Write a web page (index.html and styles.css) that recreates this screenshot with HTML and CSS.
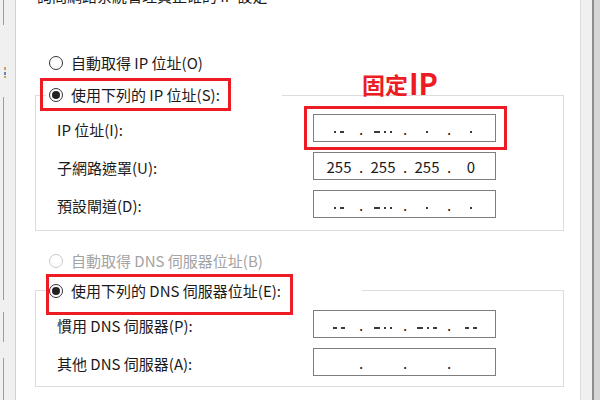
FILE: index.html
```html
<!DOCTYPE html>
<html lang="zh-Hant">
<head>
<meta charset="utf-8">
<title>IPv4 內容</title>
<link rel="stylesheet" href="styles.css">
</head>
<body>
<div class="window">
  <div class="side-left"></div>
  <main class="dialog">
    <p class="intro">詢問網路系統管理員正確的 IP 設定</p>
    <div class="opt standalone"><span class="radio"></span><span>自動取得 IP 位址(O)</span></div>
    <div class="annot-title"><span class="cjk">固定</span><span class="lat">IP</span></div>

    <section class="group g1">
      <div class="legend l1">
        <div class="opt"><span class="radio on"></span><span>使用下列的 IP 位址(S):</span></div>
        <span class="mark mk1"></span>
      </div>
      <div class="rows">
        <div class="row">
          <span class="label">IP 位址(I):</span>
          <div class="field">
            <div class="ip">
              <span class="seg blur"><b class="d"></b><b class="s"></b></span><span class="dot">.</span>
              <span class="seg blur"><b class="l"></b><b class="d"></b><b class="d"></b></span><span class="dot">.</span>
              <span class="seg blur"><b class="d"></b></span><span class="dot">.</span>
              <span class="seg blur"><b class="d"></b></span>
            </div>
            <span class="mark mk2"></span>
          </div>
        </div>
        <div class="row">
          <span class="label">子網路遮罩(U):</span>
          <div class="field">
            <div class="ip">
              <span class="seg">255</span><span class="dot">.</span>
              <span class="seg">255</span><span class="dot">.</span>
              <span class="seg">255</span><span class="dot">.</span>
              <span class="seg">0</span>
            </div>
          </div>
        </div>
        <div class="row">
          <span class="label">預設閘道(D):</span>
          <div class="field">
            <div class="ip">
              <span class="seg blur"><b class="d"></b><b class="s"></b></span><span class="dot">.</span>
              <span class="seg blur"><b class="l"></b><b class="d"></b><b class="d"></b></span><span class="dot">.</span>
              <span class="seg blur"><b class="d"></b></span><span class="dot">.</span>
              <span class="seg blur"><b class="d"></b></span>
            </div>
          </div>
        </div>
      </div>
    </section>

    <div class="opt standalone disabled"><span class="radio off"></span><span>自動取得 DNS 伺服器位址(B)</span></div>

    <section class="group g2">
      <div class="legend l2">
        <div class="opt"><span class="radio on"></span><span>使用下列的 DNS 伺服器位址(E):</span></div>
        <span class="mark mk3"></span>
      </div>
      <div class="rows">
        <div class="row">
          <span class="label">慣用 DNS 伺服器(P):</span>
          <div class="field">
            <div class="ip">
              <span class="seg blur"><b class="s"></b><b class="s"></b></span><span class="dot">.</span>
              <span class="seg blur"><b class="l"></b><b class="d"></b><b class="d"></b></span><span class="dot">.</span>
              <span class="seg blur"><b class="l"></b><b class="d"></b><b class="s"></b></span><span class="dot">.</span>
              <span class="seg blur"><b class="s"></b><b class="s"></b></span>
            </div>
          </div>
        </div>
        <div class="row">
          <span class="label">其他 DNS 伺服器(A):</span>
          <div class="field">
            <div class="ip">
              <span class="seg"></span><span class="dot">.</span>
              <span class="seg"></span><span class="dot">.</span>
              <span class="seg"></span><span class="dot">.</span>
              <span class="seg"></span>
            </div>
          </div>
        </div>
      </div>
    </section>
  </main>
  <div class="side-right"></div>
</div>
</body>
</html>
```

FILE: styles.css
```css
* { box-sizing: border-box; }

html, body {
  margin: 0;
  padding: 0;
}

body {
  width: 600px;
  height: 400px;
  overflow: hidden;
  background: #ffffff;
  font-family: "Noto Sans CJK TC", "Noto Sans", "Liberation Sans", sans-serif;
  font-size: 15px;
  color: #1a1a1a;
}

.window {
  display: flex;
  width: 600px;
  height: 400px;
}

.side-left {
  flex: none;
  width: 16px;
  height: 400px;
  border-right: 1px solid #d2d2d2;
  background:
    linear-gradient(#9c9c9c, #9c9c9c) 3px 0 / 1px 25px no-repeat,
    linear-gradient(#9c9c9c, #9c9c9c) 3px 97px / 1px 203px no-repeat,
    linear-gradient(#9c9c9c, #9c9c9c) 3px 312px / 1px 30px no-repeat,
    linear-gradient(#9c9c9c, #9c9c9c) 3px 358px / 1px 42px no-repeat,
    linear-gradient(#c8a060, #c8a060) 4px 67px / 2px 3px no-repeat,
    linear-gradient(#7080b0, #7080b0) 4px 72px / 2px 3px no-repeat,
    linear-gradient(#c8a060, #c8a060) 4px 76px / 2px 2px no-repeat,
    #f0f0f0;
}

.side-right {
  flex: none;
  width: 20px;
  height: 400px;
  border-left: 1px solid #dcdcdc;
  background: linear-gradient(to right, #f0f0f0 0 11px, #8e8e8e 11px 13px, #d6d6d6 13px);
}

.dialog {
  flex: 1;
  position: relative;
  padding-left: 19px;
  background: #ffffff;
}

.intro {
  margin: -14px 0 0 2px;
  line-height: 20px;
  white-space: nowrap;
}

.opt {
  display: flex;
  align-items: center;
  gap: 8px;
  height: 27px;
  white-space: nowrap;
}

.standalone {
  padding-left: 14px;
}

.opt.standalone:first-of-type {
  margin-top: 43px;
}

.disabled {
  color: #a3a3a3;
  margin-top: 16px;
}

.radio {
  flex: none;
  width: 14px;
  height: 14px;
  border: 1px solid #333333;
  border-radius: 50%;
  background: #ffffff;
  display: grid;
  place-items: center;
}

.radio.on::after {
  content: "";
  width: 8px;
  height: 8px;
  border-radius: 50%;
  background: #222222;
}

.radio.off {
  border-color: #c8c8c8;
}

.annot-title {
  position: absolute;
  left: 346px;
  top: 66px;
  color: #ed1c24;
  font-weight: 700;
  line-height: 32px;
  white-space: nowrap;
}

.annot-title .cjk {
  font-size: 23px;
  position: relative;
  top: -1px;
}

.annot-title .lat {
  font-size: 29px;
  margin-left: 1px;
}

.group {
  width: 529px;
  border: 1px solid #dcdcdc;
}

.g1 {
  margin-top: 19px;
  padding-bottom: 12px;
}

.g2 {
  margin-top: 16px;
  padding-bottom: 10px;
}

.legend {
  position: relative;
  margin-left: 10px;
  padding-left: 3px;
  background: #ffffff;
}

.l1 {
  width: 236px;
  margin-top: -15px;
}

.l2 {
  width: 316px;
  margin-top: -14px;
}

.mark {
  position: absolute;
  border: 3px solid #ed1c24;
  pointer-events: none;
}

.mk1 {
  left: -6px;
  top: -3px;
  width: 191px;
  height: 33px;
}

.mk3 {
  left: 0;
  top: -3px;
  width: 247px;
  height: 41px;
}

.mk2 {
  left: -9px;
  top: -8px;
  width: 203px;
  height: 44px;
}

.rows {
  display: flex;
  flex-direction: column;
  gap: 10px;
  margin-top: 6px;
  padding-left: 21px;
}

.row {
  display: flex;
  align-items: center;
  height: 28px;
}

.label {
  width: 256px;
  padding-top: 3px;
  white-space: nowrap;
}

.field {
  position: relative;
}

.ip {
  display: flex;
  align-items: center;
  width: 183px;
  height: 28px;
  padding-left: 7px;
  border: 1px solid #7d7d7d;
  background: #ffffff;
  color: #1a1a1a;
}

.seg {
  width: 36px;
  text-align: center;
}

.dot {
  width: 8px;
  text-align: center;
}

.seg.blur {
  display: flex;
  justify-content: center;
  align-items: flex-end;
  gap: 4px;
  height: 14px;
  padding-bottom: 2px;
}

.seg.blur b {
  display: block;
  height: 2px;
  background: #3a3a3a;
}

.seg.blur b.d { width: 2px; }
.seg.blur b.s { width: 4px; }
.seg.blur b.l { width: 6px; }
```
